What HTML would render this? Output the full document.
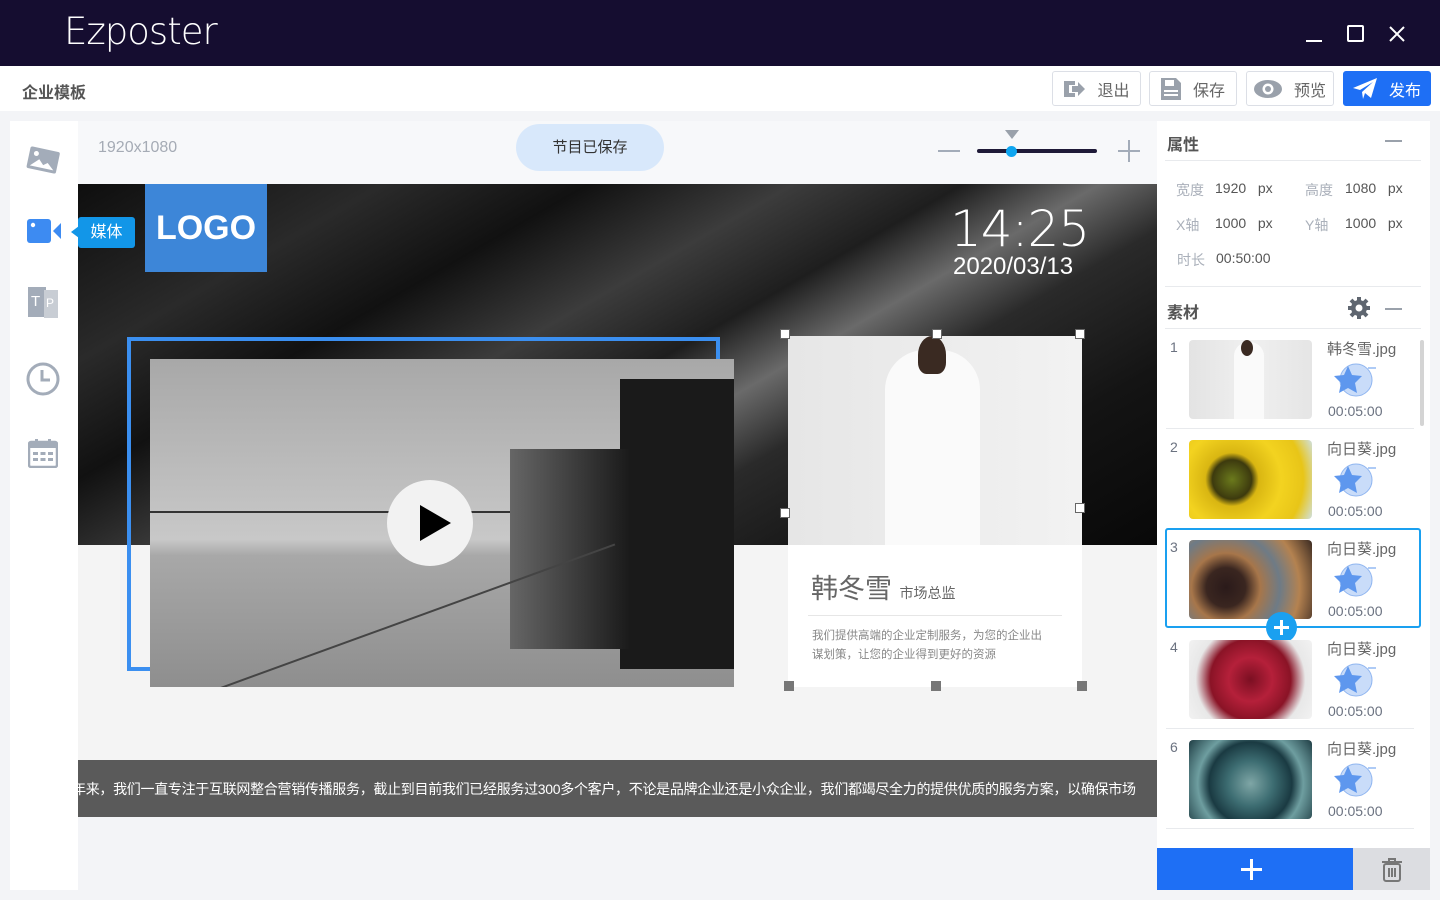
<!DOCTYPE html>
<html><head><meta charset="utf-8"><style>
*{margin:0;padding:0;box-sizing:border-box}
body{width:1440px;height:900px;overflow:hidden;background:#f3f4f7;font-family:"Liberation Sans","Noto Sans CJK SC",sans-serif;position:relative}
.a{position:absolute}
.btn{position:absolute;top:71px;height:35px;border:1px solid #dcdfe6;border-radius:3px;background:#fff;color:#666;font-size:16px;display:flex;align-items:center;justify-content:center;gap:12px}
.lbl{color:#aab0ba;font-size:14px}
.val{color:#555;font-size:14px}
.item{position:absolute;left:1166px;width:248px;height:100px;border-bottom:1px solid #e8eaed}
.item .n{position:absolute;left:4px;top:10px;color:#6b7280;font-size:14px}
.item .th{position:absolute;left:23px;top:11px;width:123px;height:79px;border-radius:4px}
.item .fn{position:absolute;left:161px;top:9px;color:#666;font-size:15px}
.item .tm{position:absolute;left:162px;top:74px;color:#6b7280;font-size:14px}
.item svg{position:absolute;left:166px;top:33px}
</style></head><body>
<div class="a" style="left:0;top:0;width:1440px;height:66px;background:#150d30"></div>
<div class="a" style="left:64px;top:10px;color:#fff;font-size:37px;letter-spacing:-1px;font-family:'DejaVu Sans','Liberation Sans',sans-serif;font-weight:200">Ezposter</div>
<div class="a" style="left:1306px;top:40px;width:16px;height:2px;background:#fff"></div>
<div class="a" style="left:1347px;top:25px;width:17px;height:17px;border:2px solid #fff;border-radius:2px"></div>
<svg class="a" style="left:1388px;top:25px" width="18" height="18"><path d="M2 2L16 16M16 2L2 16" stroke="#fff" stroke-width="2"/></svg>
<div class="a" style="left:0;top:66px;width:1440px;height:45px;background:#fff"></div>
<div class="a" style="left:22px;top:79px;font-size:16px;font-weight:bold;color:#555">企业模板</div>
<div class="btn" style="left:1052px;width:89px"><svg width="22" height="20"><path d="M1 2h11v4H6v8h6v4H1z" fill="#9aa1ab"/><path d="M9 7h6V3l7 7-7 7v-4H9z" fill="#9aa1ab"/></svg>退出</div>
<div class="btn" style="left:1149px;width:88px"><svg width="20" height="22"><path d="M0 0h15l5 5v17H0z" fill="#9aa1ab"/><rect x="4" y="2" width="9" height="6" fill="#fff"/><rect x="3" y="12" width="14" height="2" fill="#fff"/><rect x="3" y="16" width="14" height="2" fill="#fff"/></svg>保存</div>
<div class="btn" style="left:1246px;width:88px"><svg width="28" height="18"><ellipse cx="14" cy="9" rx="14" ry="9" fill="#9aa1ab"/><circle cx="14" cy="9" r="5.5" fill="#fff"/><circle cx="14" cy="9" r="3" fill="#9aa1ab"/></svg>预览</div>
<div class="btn" style="left:1343px;width:88px;background:#1e6ff5;border-color:#1e6ff5;color:#fff"><svg width="24" height="22"><path d="M0 10L24 0 18 20 12 15 10 21 9 14 20 4 7 12z" fill="#fff"/></svg>发布</div>
<div class="a" style="left:10px;top:121px;width:68px;height:769px;background:#fff"></div>
<svg class="a" style="left:25px;top:145px" width="36" height="32"><g transform="rotate(12 18 16)"><rect x="3" y="4" width="30" height="22" rx="2" fill="#a3acb9"/><circle cx="10" cy="10" r="2.5" fill="#fff"/><path d="M6 23l8-8 5 5 4-3 7 6z" fill="#fff"/></g></svg>
<svg class="a" style="left:27px;top:217px" width="34" height="28"><rect x="0" y="2" width="24" height="24" rx="3" fill="#3d8bf2"/><circle cx="6" cy="8" r="2.2" fill="#fff"/><path d="M26 14l8-8v16z" fill="#3d8bf2"/></svg>
<div class="a" style="left:28px;top:287px;width:18px;height:30px;background:#a3acb9;color:#fff;font-size:15px;padding:6px 0 0 3px">T</div>
<div class="a" style="left:44px;top:290px;width:14px;height:28px;background:#c8cdd4;color:#fff;font-size:12px;padding:6px 0 0 2px">P</div>
<svg class="a" style="left:26px;top:362px" width="34" height="34"><circle cx="17" cy="17" r="15" fill="none" stroke="#a3acb9" stroke-width="3"/><path d="M16 8v10h8" fill="none" stroke="#a3acb9" stroke-width="3"/></svg>
<svg class="a" style="left:28px;top:438px" width="30" height="30"><rect x="1" y="4" width="28" height="25" rx="2" fill="none" stroke="#a3acb9" stroke-width="2.5"/><rect x="1" y="4" width="28" height="6" fill="#a3acb9"/><rect x="7" y="1" width="3" height="7" fill="#a3acb9"/><rect x="20" y="1" width="3" height="7" fill="#a3acb9"/><g fill="#a3acb9"><rect x="5" y="14" width="5" height="3"/><rect x="12.5" y="14" width="5" height="3"/><rect x="20" y="14" width="5" height="3"/><rect x="5" y="20" width="5" height="3"/><rect x="12.5" y="20" width="5" height="3"/><rect x="20" y="20" width="5" height="3"/></g></svg>
<div class="a" style="left:78px;top:121px;width:1079px;height:63px;background:#f7f8fa"></div>
<div class="a" style="left:98px;top:139px;color:#a5abb5;font-size:16px">1920x1080</div>
<div class="a" style="left:516px;top:124px;width:148px;height:47px;background:#d8e8fb;border-radius:24px;color:#333;font-size:15px;line-height:47px;text-align:center">节目已保存</div>
<div class="a" style="left:938px;top:150px;width:22px;height:2px;background:#a3acb9"></div>
<div class="a" style="left:977px;top:149px;width:120px;height:4px;background:#1f1a38;border-radius:2px"></div>
<div class="a" style="left:1005px;top:130px;width:0;height:0;border-left:7px solid transparent;border-right:7px solid transparent;border-top:9px solid #9aa1ab"></div>
<div class="a" style="left:1006px;top:146px;width:11px;height:11px;border-radius:50%;background:#0ea5f0"></div>
<div class="a" style="left:1118px;top:150px;width:22px;height:2px;background:#a3acb9"></div>
<div class="a" style="left:1128px;top:140px;width:2px;height:22px;background:#a3acb9"></div>
<div class="a" style="left:78px;top:184px;width:1079px;height:361px;background:linear-gradient(150deg,#0e0e0e 0%,#2a2a2a 18%,#111 30%,#3c3c3c 42%,#1e1e1e 52%,#6a6a6a 60%,#2a2a2a 68%,#141414 82%,#080808 100%)"></div>
<div class="a" style="left:78px;top:545px;width:1079px;height:215px;background:#f4f4f4"></div>
<div class="a" style="left:145px;top:184px;width:122px;height:88px;background:#3d86d8;color:#fff;font-size:34px;font-weight:bold;line-height:88px;text-align:center">LOGO</div>
<div class="a" style="left:950px;top:200px;color:#fff;font-size:50px;font-family:'DejaVu Sans','Liberation Sans',sans-serif;font-weight:200;letter-spacing:-1px">14:25</div>
<div class="a" style="left:953px;top:253px;color:#fff;font-size:24px">2020/03/13</div>
<div class="a" style="left:127px;top:337px;width:593px;height:334px;border:4px solid #3b8ff0"></div>
<div class="a" style="left:150px;top:359px;width:584px;height:328px;background:linear-gradient(180deg,#a8a8a8 0%,#c8c8c8 55%,#a8a8a8 60%,#8e8e8e 100%);overflow:hidden">
 <div class="a" style="left:470px;top:20px;width:114px;height:290px;background:#1a1a1a"></div>
 <div class="a" style="left:360px;top:90px;width:120px;height:200px;background:linear-gradient(90deg,#666,#1a1a1a)"></div>
 <div class="a" style="left:0;top:152px;width:360px;height:2px;background:#333"></div>
 <div class="a" style="left:-20px;top:270px;width:500px;height:2px;background:#444;transform:rotate(-20deg)"></div>
</div>
<div class="a" style="left:387px;top:480px;width:86px;height:86px;border-radius:50%;background:#f2f2f2"></div>
<div class="a" style="left:420px;top:505px;width:0;height:0;border-top:18px solid transparent;border-bottom:18px solid transparent;border-left:31px solid #000"></div>
<div class="a" style="left:788px;top:336px;width:294px;height:351px;background:#fff"></div>
<div class="a" style="left:788px;top:336px;width:294px;height:209px;background:linear-gradient(90deg,#e6e6e6,#f2f2f2)"></div>
<div class="a" style="left:885px;top:350px;width:95px;height:195px;background:#fafafa;border-radius:40px 40px 0 0"></div>
<div class="a" style="left:918px;top:336px;width:28px;height:38px;background:#3a2a22;border-radius:50% 50% 30% 30%"></div>
<div class="a" style="left:811px;top:567px;color:#666;font-size:27px">韩冬雪 <span style="font-size:14px">市场总监</span></div>
<div class="a" style="left:808px;top:615px;width:254px;height:1px;background:#e6e6e6"></div>
<div class="a" style="left:812px;top:627px;width:240px;color:#888;font-size:11.5px;line-height:19px">我们提供高端的企业定制服务，为您的企业出谋划策，让您的企业得到更好的资源</div>
<div class="a" style="left:780px;top:329px;width:10px;height:10px;border:1px solid #666;background:#fff"></div>
<div class="a" style="left:932px;top:329px;width:10px;height:10px;border:1px solid #666;background:#fff"></div>
<div class="a" style="left:1075px;top:329px;width:10px;height:10px;border:1px solid #666;background:#fff"></div>
<div class="a" style="left:780px;top:508px;width:10px;height:10px;border:1px solid #666;background:#fff"></div>
<div class="a" style="left:1075px;top:503px;width:10px;height:10px;border:1px solid #666;background:#fff"></div>
<div class="a" style="left:784px;top:681px;width:10px;height:10px;background:#777"></div>
<div class="a" style="left:931px;top:681px;width:10px;height:10px;background:#777"></div>
<div class="a" style="left:1077px;top:681px;width:10px;height:10px;background:#777"></div>
<div class="a" style="left:78px;top:760px;width:1079px;height:57px;background:#5a5a5a;overflow:hidden;white-space:nowrap;color:#fff;font-size:14px;line-height:58px"><span style="margin-left:-6px;letter-spacing:-0.3px">年来，我们一直专注于互联网整合营销传播服务，截止到目前我们已经服务过300多个客户，不论是品牌企业还是小众企业，我们都竭尽全力的提供优质的服务方案，以确保市场</span></div>
<!-- tooltip on top -->
<div class="a" style="left:71px;top:226px;width:0;height:0;border-top:6px solid transparent;border-bottom:6px solid transparent;border-right:8px solid #1296e8"></div>
<div class="a" style="left:78px;top:217px;width:57px;height:31px;background:#1296e8;border-radius:3px;color:#fff;font-size:16px;line-height:31px;text-align:center">媒体</div>
<div class="a" style="left:1157px;top:121px;width:273px;height:769px;background:#fff"></div>
<div class="a" style="left:1167px;top:131px;font-size:16px;font-weight:bold;color:#555">属性</div>
<div class="a" style="left:1385px;top:140px;width:17px;height:2px;background:#9aa1ab"></div>
<div class="a" style="left:1165px;top:160px;width:256px;height:1px;background:#e8eaed"></div>
<div class="a lbl" style="left:1176px;top:180px">宽度</div><div class="a val" style="left:1215px;top:180px">1920&nbsp;&nbsp;&nbsp;px</div>
<div class="a lbl" style="left:1305px;top:180px">高度</div><div class="a val" style="left:1345px;top:180px">1080&nbsp;&nbsp;&nbsp;px</div>
<div class="a lbl" style="left:1176px;top:215px">X轴</div><div class="a val" style="left:1215px;top:215px">1000&nbsp;&nbsp;&nbsp;px</div>
<div class="a lbl" style="left:1305px;top:215px">Y轴</div><div class="a val" style="left:1345px;top:215px">1000&nbsp;&nbsp;&nbsp;px</div>
<div class="a lbl" style="left:1177px;top:250px">时长</div><div class="a val" style="left:1216px;top:250px">00:50:00</div>
<div class="a" style="left:1165px;top:286px;width:256px;height:1px;background:#e8eaed"></div>
<div class="a" style="left:1167px;top:299px;font-size:16px;font-weight:bold;color:#555">素材</div>
<svg class="a" style="left:1348px;top:297px" width="22" height="22"><g fill="#5f6670"><circle cx="11" cy="11" r="8"/><g stroke="#5f6670" stroke-width="4"><path d="M11 0v22M0 11h22M3 3l16 16M19 3L3 19"/></g></g><circle cx="11" cy="11" r="3.5" fill="#fff"/></svg>
<div class="a" style="left:1385px;top:308px;width:17px;height:2px;background:#9aa1ab"></div>
<div class="a" style="left:1165px;top:328px;width:256px;height:1px;background:#e8eaed"></div>
<div class="a" style="left:1420px;top:340px;width:4px;height:86px;background:#d4d4d4;border-radius:2px"></div>
<div class="item" style="top:329px"><div class="n">1</div><div class="th" style="background:linear-gradient(90deg,#e3e3e3,#f0f0f0 50%,#e5e5e5)"><div class="a" style="left:45px;top:2px;width:30px;height:77px;background:#fafafa;border-radius:14px 14px 0 0"></div><div class="a" style="left:52px;top:0;width:12px;height:16px;background:#3a2a22;border-radius:50%"></div></div><div class="fn">韩冬雪.jpg</div><svg width="44" height="36"><circle cx="24" cy="18" r="16" fill="#c9dcf9" stroke="#8fb5f0"/><path d="M16 4l4 9 10 1-7 7 2 10-9-5-9 5 2-10-7-7 10-1z" fill="#5e97ee"/><path d="M36 6h8" stroke="#5e97ee"/></svg><div class="tm">00:05:00</div></div>
<div class="item" style="top:429px"><div class="n">2</div><div class="th" style="background:radial-gradient(circle at 35% 50%,#6b7a1c 0,#3d3a0e 22%,#d9b612 30%,#f3d320 55%,#e8c518 80%,#cfe0e0 100%)"></div><div class="fn">向日葵.jpg</div><svg width="44" height="36"><circle cx="24" cy="18" r="16" fill="#c9dcf9" stroke="#8fb5f0"/><path d="M16 4l4 9 10 1-7 7 2 10-9-5-9 5 2-10-7-7 10-1z" fill="#5e97ee"/><path d="M36 6h8" stroke="#5e97ee"/></svg><div class="tm">00:05:00</div></div>
<div class="a" style="left:1165px;top:528px;width:256px;height:100px;border:2px solid #1aa0f0;border-radius:3px"></div>
<div class="item" style="top:529px;border:none"><div class="n">3</div><div class="th" style="background:radial-gradient(circle at 30% 60%,#2a1a1a 0,#3a2620 20%,#a7764a 35%,#6e7b86 55%,#b48250 75%,#3a2a22 100%)"></div><div class="fn">向日葵.jpg</div><svg width="44" height="36"><circle cx="24" cy="18" r="16" fill="#c9dcf9" stroke="#8fb5f0"/><path d="M16 4l4 9 10 1-7 7 2 10-9-5-9 5 2-10-7-7 10-1z" fill="#5e97ee"/><path d="M36 6h8" stroke="#5e97ee"/></svg><div class="tm">00:05:00</div></div>
<div class="a" style="left:1266px;top:612px;width:31px;height:31px;border-radius:50%;background:#1aa0f0"></div>
<div class="a" style="left:1274px;top:626px;width:15px;height:3px;background:#fff"></div>
<div class="a" style="left:1280px;top:620px;width:3px;height:15px;background:#fff"></div>
<div class="item" style="top:629px"><div class="n">4</div><div class="th" style="background:radial-gradient(circle at 50% 50%,#7b0f22 0,#b5203a 30%,#8a1326 55%,#e8e8e8 75%,#f2f2f2 100%)"></div><div class="fn">向日葵.jpg</div><svg width="44" height="36"><circle cx="24" cy="18" r="16" fill="#c9dcf9" stroke="#8fb5f0"/><path d="M16 4l4 9 10 1-7 7 2 10-9-5-9 5 2-10-7-7 10-1z" fill="#5e97ee"/><path d="M36 6h8" stroke="#5e97ee"/></svg><div class="tm">00:05:00</div></div>
<div class="item" style="top:729px"><div class="n">6</div><div class="th" style="background:radial-gradient(circle at 50% 55%,#7fa6a6 0,#3d6d72 30%,#1a3a42 55%,#6e9ea0 70%,#1f3d44 100%)"></div><div class="fn">向日葵.jpg</div><svg width="44" height="36"><circle cx="24" cy="18" r="16" fill="#c9dcf9" stroke="#8fb5f0"/><path d="M16 4l4 9 10 1-7 7 2 10-9-5-9 5 2-10-7-7 10-1z" fill="#5e97ee"/><path d="M36 6h8" stroke="#5e97ee"/></svg><div class="tm">00:05:00</div></div>
<div class="a" style="left:1157px;top:848px;width:196px;height:42px;background:#1e6ff5"></div>
<div class="a" style="left:1241px;top:868px;width:21px;height:3px;background:#fff"></div>
<div class="a" style="left:1250px;top:859px;width:3px;height:21px;background:#fff"></div>
<div class="a" style="left:1353px;top:848px;width:77px;height:42px;background:#dcdde1"></div>
<svg class="a" style="left:1381px;top:858px" width="22" height="24"><path d="M1 4h20M8 4V1h6v3" stroke="#777" stroke-width="2" fill="none"/><rect x="3" y="6" width="16" height="17" rx="2" fill="none" stroke="#777" stroke-width="2"/><path d="M8 10v9M11 10v9M14 10v9" stroke="#777" stroke-width="2"/></svg>
</body></html>
